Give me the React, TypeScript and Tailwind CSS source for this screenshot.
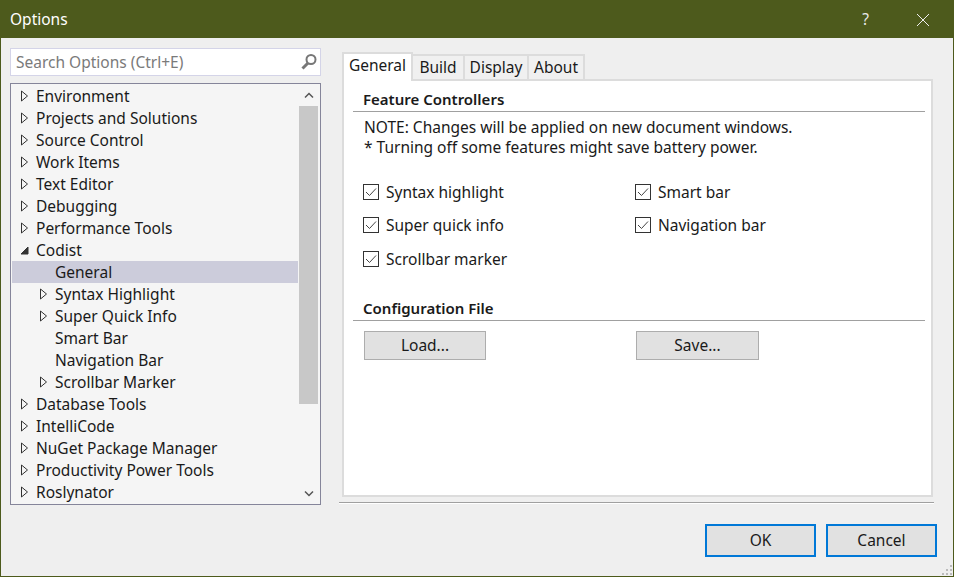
import React from "react";

const Tri = ({ open }: { open?: boolean }) =>
  open ? (
    <svg width="9" height="9" viewBox="0 0 9 9" className="shrink-0">
      <path d="M8 1V8H1Z" fill="#333" stroke="#333" />
    </svg>
  ) : (
    <svg width="9" height="12" viewBox="0 0 9 12" className="shrink-0">
      <path d="M1.5 1L7.5 6L1.5 11Z" fill="none" stroke="#333" strokeWidth="1" />
    </svg>
  );

const rows: { t: string; level: number; icon: "c" | "o" | "n"; sel?: boolean }[] = [
  { t: "Environment", level: 0, icon: "c" },
  { t: "Projects and Solutions", level: 0, icon: "c" },
  { t: "Source Control", level: 0, icon: "c" },
  { t: "Work Items", level: 0, icon: "c" },
  { t: "Text Editor", level: 0, icon: "c" },
  { t: "Debugging", level: 0, icon: "c" },
  { t: "Performance Tools", level: 0, icon: "c" },
  { t: "Codist", level: 0, icon: "o" },
  { t: "General", level: 1, icon: "n", sel: true },
  { t: "Syntax Highlight", level: 1, icon: "c" },
  { t: "Super Quick Info", level: 1, icon: "c" },
  { t: "Smart Bar", level: 1, icon: "n" },
  { t: "Navigation Bar", level: 1, icon: "n" },
  { t: "Scrollbar Marker", level: 1, icon: "c" },
  { t: "Database Tools", level: 0, icon: "c" },
  { t: "IntelliCode", level: 0, icon: "c" },
  { t: "NuGet Package Manager", level: 0, icon: "c" },
  { t: "Productivity Power Tools", level: 0, icon: "c" },
  { t: "Roslynator", level: 0, icon: "c" },
];

const Check = ({ label, className = "" }: { label: string; className?: string }) => (
  <div className={`flex items-center h-[20px] ${className}`}>
    <div className="w-[16px] h-[16px] border border-[#333] bg-white flex items-center justify-center shrink-0">
      <svg width="12" height="10" viewBox="0 0 12 10">
        <path d="M1 5L4.5 8.5L11 1.5" fill="none" stroke="#444" strokeWidth="1" />
      </svg>
    </div>
    <span className="ml-[7px] pt-[2px]">{label}</span>
  </div>
);

const Tab = ({ t, w, active }: { t: string; w: string; active?: boolean }) => (
  <div
    className={
      active
        ? `${w} h-[29px] -mb-[2px] pb-[4px] bg-white border-2 border-b-0 border-[#dcdcdc] flex items-center justify-center z-10`
        : `${w} h-[25px] bg-[#f0f0f0] border-2 border-l-0 border-b-0 border-[#dcdcdc] flex items-center justify-center`
    }
  >
    {t}
  </div>
);

export default function App() {
  return (
    <div
      className="w-[954px] h-[577px] flex flex-col border border-[#4d5a1c] bg-[#efefef] text-[#1a1a1a] text-[15.5px] overflow-hidden"
      style={{ fontFamily: '"Noto Sans", sans-serif' }}
    >
      <div className="h-[37px] shrink-0 bg-[#4d5a1c] flex items-center pl-[9px] text-white">
        <span className="flex-1">Options</span>
        <span className="mr-[47px] text-[#e8e8e8]">?</span>
        <svg width="14" height="14" viewBox="0 0 14 14" className="mr-[23px]">
          <path d="M1 1L13 13M13 1L1 13" stroke="#eee" strokeWidth="1" />
        </svg>
      </div>

      <div className="flex flex-1 min-h-0">
        <div className="w-[338px] shrink-0 pl-[9px] pt-[10px]">
          <div className="w-[311px] h-[28px] bg-white border border-[#d4d4e8] flex items-center pl-[5px] pr-[3px] text-[#7a7a7a]">
            <span className="flex-1 pt-[2px]">Search Options (Ctrl+E)</span>
            <svg width="18" height="18" viewBox="0 0 18 18">
              <circle cx="12" cy="6.5" r="4.5" fill="none" stroke="#777" strokeWidth="2" />
              <path d="M9 10L3.5 15.5" stroke="#777" strokeWidth="3" />
            </svg>
          </div>
          <div className="mt-[7px] w-[311px] h-[422px] border border-[#85859a] bg-[#f5f5f5] flex">
            <div className="flex-1 pt-[1px] pl-[1px] overflow-hidden">
              {rows.map((r) => (
                <div
                  key={r.t}
                  className={`h-[22px] flex items-center ${r.sel ? "bg-[#ccccdb]" : ""} ${r.level ? "pl-[27px]" : "pl-[8px]"}`}
                >
                  <span className="w-[16px] flex items-center">
                    {r.icon === "c" && <Tri />}
                    {r.icon === "o" && <Tri open />}
                  </span>
                  <span className="pt-[2px]">{r.t}</span>
                </div>
              ))}
            </div>
            <div className="w-[19px] mr-[2px] ml-[1px] flex flex-col">
              <div className="h-[22px] flex items-center justify-center">
                <svg width="10" height="7" viewBox="0 0 10 7">
                  <path d="M1 5.5L5 1.5L9 5.5" fill="none" stroke="#555" strokeWidth="1.5" />
                </svg>
              </div>
              <div className="h-[298px] bg-[#c8c8c8]" />
              <div className="flex-1" />
              <div className="h-[22px] flex items-center justify-center">
                <svg width="10" height="7" viewBox="0 0 10 7">
                  <path d="M1 1.5L5 5.5L9 1.5" fill="none" stroke="#555" strokeWidth="1.5" />
                </svg>
              </div>
            </div>
          </div>
        </div>

        <div className="w-[595px] shrink-0 pt-[14px]">
          <div className="ml-[3px] h-[27px] flex items-end">
            <Tab t="General" w="w-[71px]" active />
            <Tab t="Build" w="w-[52px]" />
            <Tab t="Display" w="w-[64px]" />
            <Tab t="About" w="w-[56px]" />
          </div>
          <div className="ml-[3px] w-[591px] h-[418px] bg-white border-2 border-[#dcdcdc] pl-[9px] pr-[6px] pt-[8px]">
            <div className="h-[22px] border-b border-[#a0a0a0] pl-[10px] font-semibold text-[15px] leading-[20px] box-content">
              Feature Controllers
            </div>
            <div className="pl-[11px] pt-[5px] leading-[20px]">
              <div>NOTE: Changes will be applied on new document windows.</div>
              <div>* Turning off some features might save battery power.</div>
            </div>
            <div className="pl-[10px] mt-[25px] grid grid-cols-[272px_1fr] grid-rows-[33px_34px_33.5px]">
              <Check label="Syntax highlight" />
              <Check label="Smart bar" />
              <Check label="Super quick info" />
              <Check label="Navigation bar" />
              <Check label="Scrollbar marker" />
            </div>
            <div className="mt-[15px] h-[22px] border-b border-[#a0a0a0] pl-[10px] font-semibold text-[15px] leading-[20px] box-content">
              Configuration File
            </div>
            <div className="pl-[11px] mt-[10px] flex">
              <div className="w-[122px] h-[29px] pt-[1px] bg-[#e1e1e1] border border-[#adadad] flex items-center justify-center">Load...</div>
              <div className="ml-[150px] w-[123px] h-[29px] pt-[1px] bg-[#e1e1e1] border border-[#adadad] flex items-center justify-center">Save...</div>
            </div>
          </div>
          <div className="mt-[5px] h-[2px] border-t border-[#a0a0a0] bg-white" />
        </div>
      </div>

      <div className="h-[57px] shrink-0 relative flex justify-end pr-[16px] pt-[5px] gap-[10px]">
        <div className="w-[111px] h-[33px] bg-[#e1e1e1] border-2 border-[#0078d7] flex items-center justify-center">OK</div>
        <div className="w-[111px] h-[33px] bg-[#e1e1e1] border-2 border-[#0078d7] flex items-center justify-center">Cancel</div>
        <svg width="12" height="12" viewBox="0 0 12 12" className="absolute right-0 bottom-0">
          <path d="M9 1h2v2h-2zM5 5h2v2h-2zM9 5h2v2h-2zM1 9h2v2h-2zM5 9h2v2h-2zM9 9h2v2h-2z" fill="#bbb" />
        </svg>
      </div>
    </div>
  );
}
